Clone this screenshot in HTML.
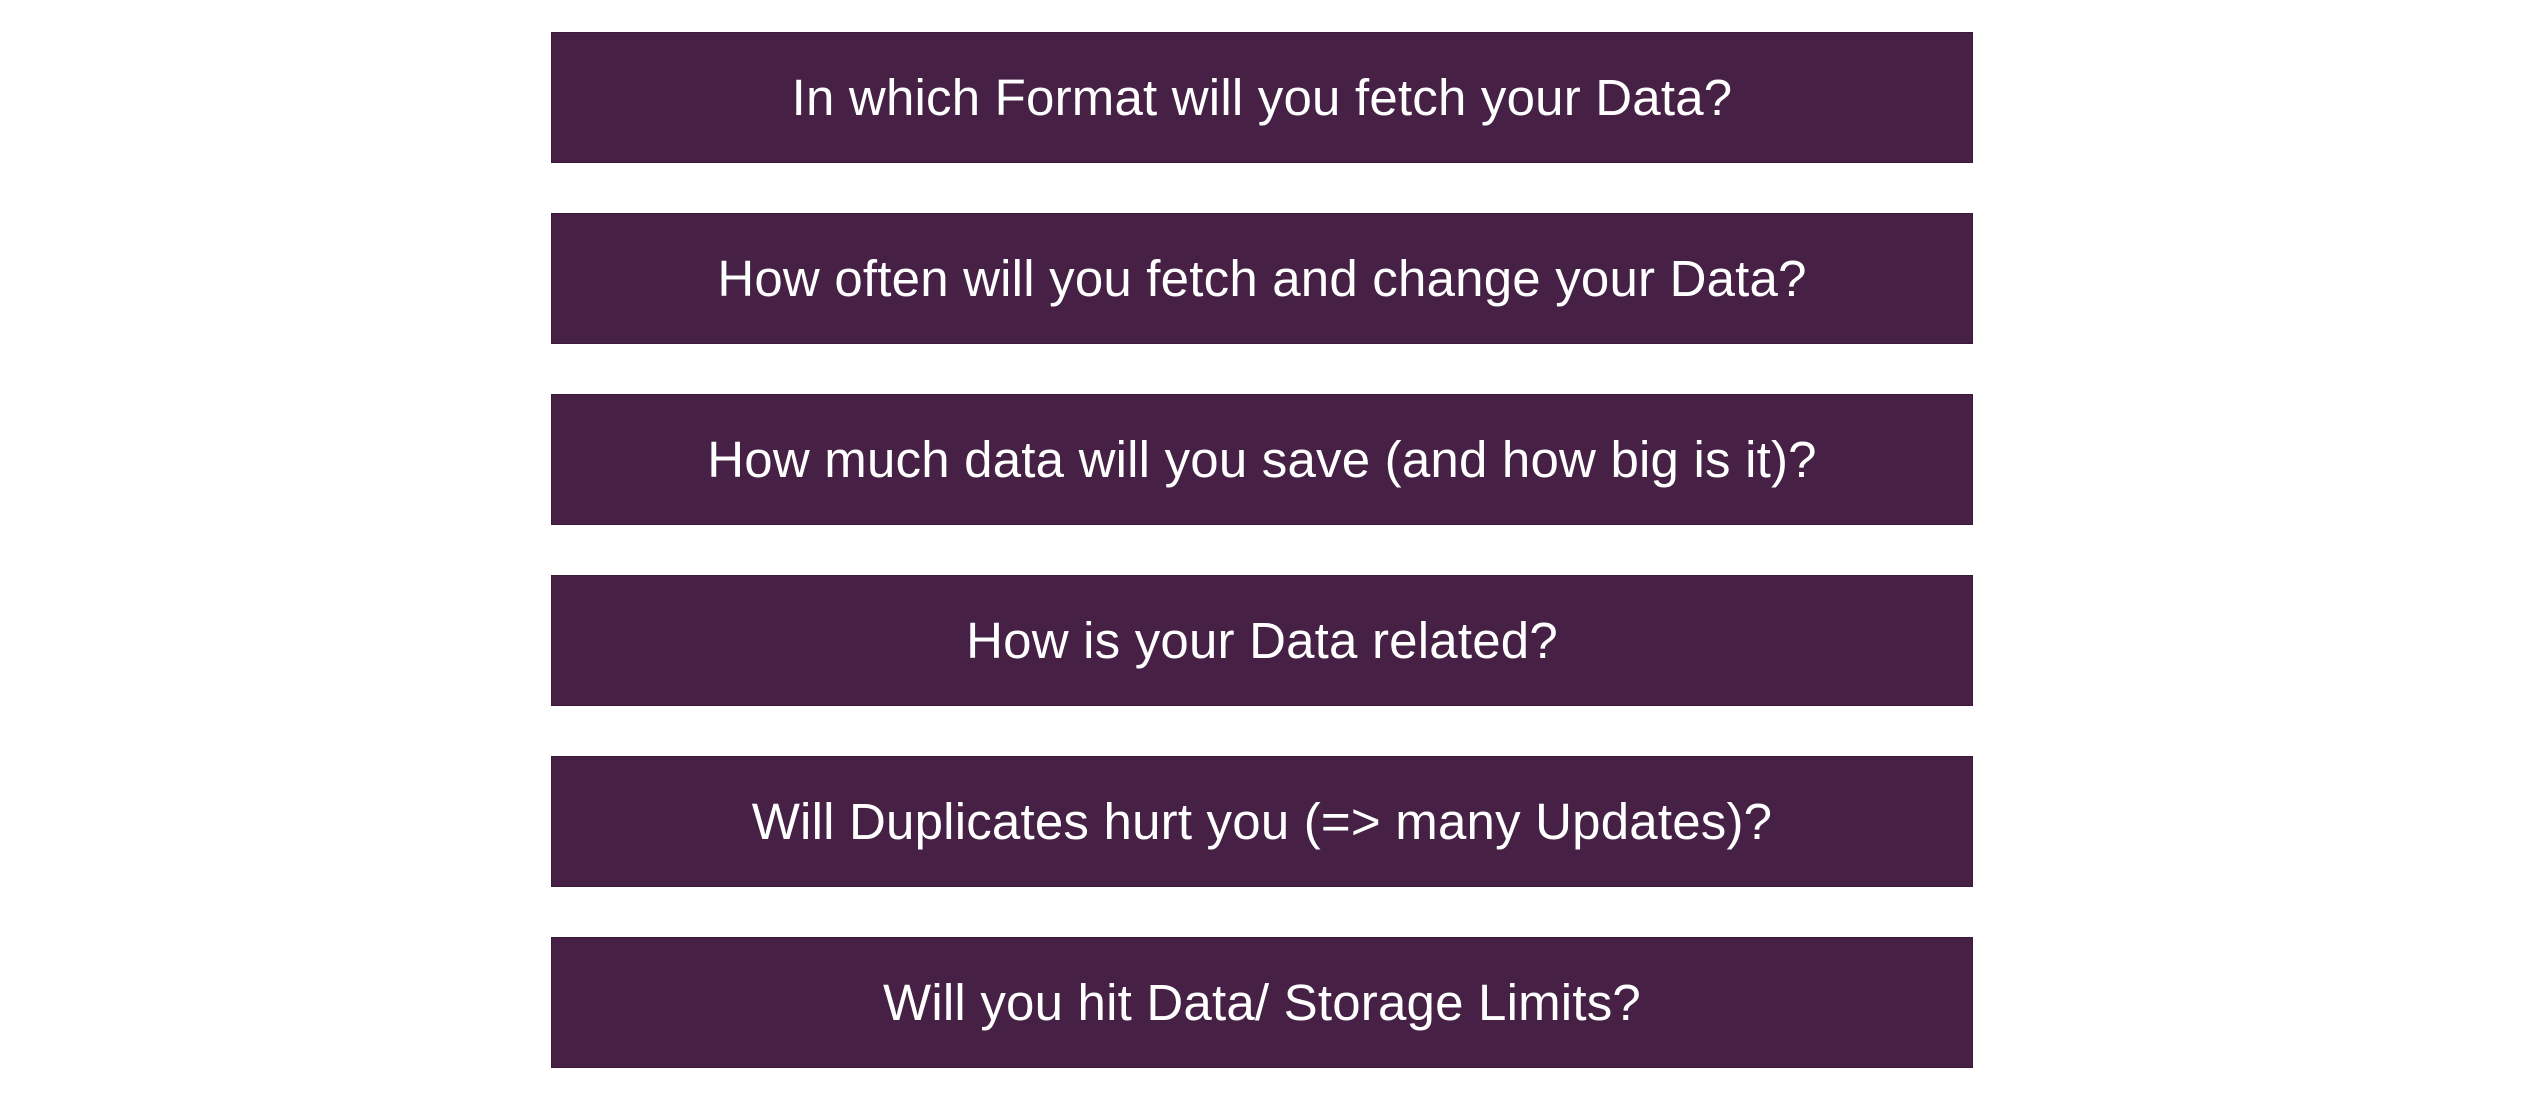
<!DOCTYPE html>
<html><head><style>
html,body{margin:0;padding:0;background:#fff;width:2532px;height:1114px;overflow:hidden}
.b{position:absolute;left:551px;width:1422px;height:131px;background:#462145;color:#fff;display:flex;align-items:center;justify-content:center;font-family:"Liberation Sans",sans-serif;font-size:51px;letter-spacing:0.2px;box-sizing:border-box;border:1px solid #3a1a38}
</style></head><body>
<div class="b" style="top:32px">In which Format will you fetch your Data?</div>
<div class="b" style="top:213px">How often will you fetch and change your Data?</div>
<div class="b" style="top:394px">How much data will you save (and how big is it)?</div>
<div class="b" style="top:575px">How is your Data related?</div>
<div class="b" style="top:756px">Will Duplicates hurt you (=&gt; many Updates)?</div>
<div class="b" style="top:937px">Will you hit Data/ Storage Limits?</div>
</body></html>
